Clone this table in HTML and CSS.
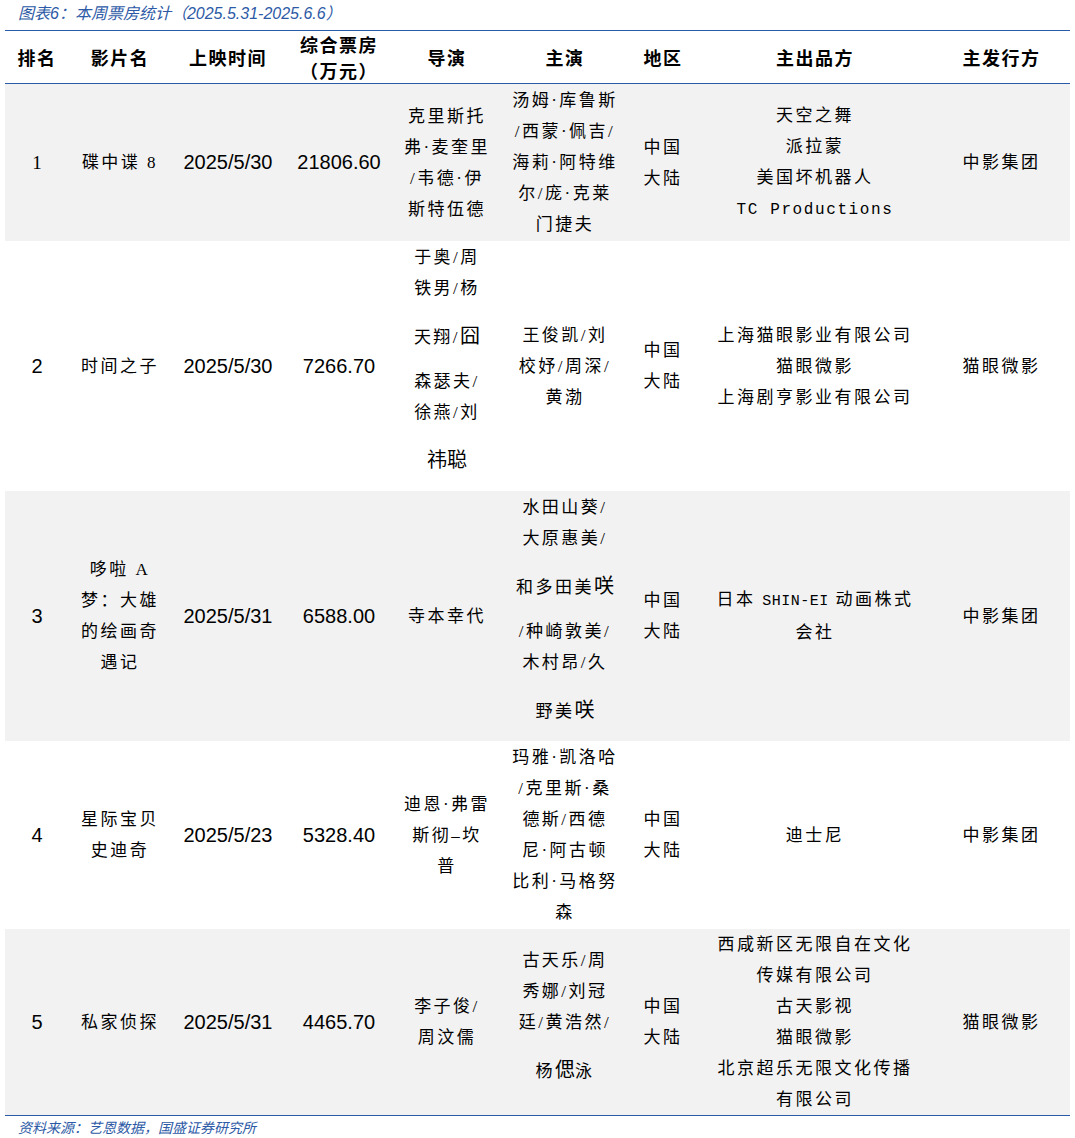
FILE: index.html
```html
<!DOCTYPE html>
<html lang="zh-CN">
<head>
<meta charset="utf-8">
<title>本周票房统计</title>
<link rel="stylesheet" href="styles.css">
</head>
<body>
<div class="page">
  <div class="caption">图表6：本周票房统计（2025.5.31-2025.6.6）</div>
  <table class="grid">
    <colgroup>
      <col class="c1"><col class="c2"><col class="c3"><col class="c4"><col class="c5">
      <col class="c6"><col class="c7"><col class="c8"><col class="c9">
    </colgroup>
    <thead>
      <tr>
        <th>排名</th><th>影片名</th><th>上映时间</th><th>综合票房<br>（万元）</th><th>导演</th>
        <th>主演</th><th>地区</th><th>主出品方</th><th>主发行方</th>
      </tr>
    </thead>
    <tbody>
      <tr class="shade">
        <td class="num serif">1</td>
        <td class="zh">碟中谍 8</td>
        <td class="num">2025/5/30</td>
        <td class="num">21806.60</td>
        <td class="zh">克里斯托<br>弗·麦奎里<br>/韦德·伊<br>斯特伍德</td>
        <td class="zh">汤姆·库鲁斯<br>/西蒙·佩吉/<br>海莉·阿特维<br>尔/庞·克莱<br>门捷夫</td>
        <td class="zh">中国<br>大陆</td>
        <td class="zh">天空之舞<br>派拉蒙<br>美国坏机器人<br><span class="mono">TC Productions</span></td>
        <td class="zh">中影集团</td>
      </tr>
      <tr>
        <td class="num">2</td>
        <td class="zh">时间之子</td>
        <td class="num">2025/5/30</td>
        <td class="num">7266.70</td>
        <td class="zh">于奥/周<br>铁男/杨<br>天翔/<span class="fb">囧</span><br>森瑟夫/<br>徐燕/刘<br><span class="fb">祎聪</span></td>
        <td class="zh">王俊凯/刘<br>校妤/周深/<br>黄渤</td>
        <td class="zh">中国<br>大陆</td>
        <td class="zh">上海猫眼影业有限公司<br>猫眼微影<br>上海剧亨影业有限公司</td>
        <td class="zh">猫眼微影</td>
      </tr>
      <tr class="shade">
        <td class="num">3</td>
        <td class="zh">哆啦 A<br>梦：大雄<br>的绘画奇<br>遇记</td>
        <td class="num">2025/5/31</td>
        <td class="num">6588.00</td>
        <td class="zh">寺本幸代</td>
        <td class="zh">水田山葵/<br>大原惠美/<br>和多田美<span class="fb">咲</span><br>/种崎敦美/<br>木村昂/久<br>野美<span class="fb">咲</span></td>
        <td class="zh">中国<br>大陆</td>
        <td class="zh">日本 <span class="mono2">SHIN-EI</span> 动画株式<br>会社</td>
        <td class="zh">中影集团</td>
      </tr>
      <tr>
        <td class="num">4</td>
        <td class="zh">星际宝贝<br>史迪奇</td>
        <td class="num">2025/5/23</td>
        <td class="num">5328.40</td>
        <td class="zh">迪恩·弗雷<br>斯彻–坎<br>普</td>
        <td class="zh">玛雅·凯洛哈<br>/克里斯·桑<br>德斯/西德<br>尼·阿古顿<br>比利·马格努<br>森</td>
        <td class="zh">中国<br>大陆</td>
        <td class="zh">迪士尼</td>
        <td class="zh">中影集团</td>
      </tr>
      <tr class="shade last">
        <td class="num">5</td>
        <td class="zh">私家侦探</td>
        <td class="num">2025/5/31</td>
        <td class="num">4465.70</td>
        <td class="zh">李子俊/<br>周汶儒</td>
        <td class="zh">古天乐/周<br>秀娜/刘冠<br>廷/黄浩然/<br>杨<span class="fb">偲</span>泳</td>
        <td class="zh">中国<br>大陆</td>
        <td class="zh">西咸新区无限自在文化<br>传媒有限公司<br>古天影视<br>猫眼微影<br>北京超乐无限文化传播<br>有限公司</td>
        <td class="zh">猫眼微影</td>
      </tr>
    </tbody>
  </table>
  <div class="source">资料来源：艺恩数据，国盛证券研究所</div>
</div>
</body>
</html>
```

FILE: styles.css
```css
html, body {
  margin: 0;
  padding: 0;
  background: #ffffff;
}

.page {
  width: 1065px;
  padding: 0 5px;
  color: #000000;
}

.caption {
  height: 30px;
  line-height: 27px;
  padding-left: 13px;
  font-family: "Liberation Sans", "Noto Sans CJK SC", sans-serif;
  font-style: italic;
  font-size: 16px;
  color: #2d5aa6;
}

.grid {
  width: 1065px;
  border-collapse: collapse;
  table-layout: fixed;
  border-top: 1.5px solid #2a5ba8;
  border-bottom: 1.5px solid #2a5ba8;
}

.c1 { width: 64px; }
.c2 { width: 102px; }
.c3 { width: 114px; }
.c4 { width: 108px; }
.c5 { width: 108px; }
.c6 { width: 128px; }
.c7 { width: 68px; }
.c8 { width: 236px; }
.c9 { width: 137px; }

.grid th {
  font-family: "Noto Sans CJK SC", sans-serif;
  font-weight: 700;
  font-size: 18px;
  letter-spacing: 1.5px;
  line-height: 26px;
  padding: 0;
  height: 51px;
  text-align: center;
  vertical-align: middle;
  border-bottom: 1.5px solid #2a5ba8;
}

.grid td {
  padding: 1px 0;
  text-align: center;
  vertical-align: middle;
  line-height: 31px;
}

.grid .last td {
  padding: 0;
}

.shade td {
  background: #f2f2f2;
}

.num {
  font-family: "Liberation Sans", sans-serif;
  font-size: 20px;
}

.num.serif {
  font-family: "Liberation Serif", serif;
  font-size: 19px;
}

.zh {
  font-family: "Liberation Serif", "Noto Sans CJK SC", serif;
  font-size: 17px;
  letter-spacing: 2.5px;
}

.mono {
  font-family: "Liberation Mono", monospace;
  font-size: 16px;
  letter-spacing: 1.6px;
}

.mono2 {
  font-family: "Liberation Mono", monospace;
  font-size: 15px;
  letter-spacing: 0.5px;
}

.fb {
  font-family: "Noto Sans CJK SC", sans-serif;
  font-size: 20px;
  letter-spacing: 0;
  line-height: 62px;
}

.source {
  padding: 2px 0 0 13px;
  font-family: "Liberation Sans", "Noto Sans CJK SC", sans-serif;
  font-style: italic;
  font-size: 14px;
  line-height: 20px;
  color: #2d5aa6;
}
```
